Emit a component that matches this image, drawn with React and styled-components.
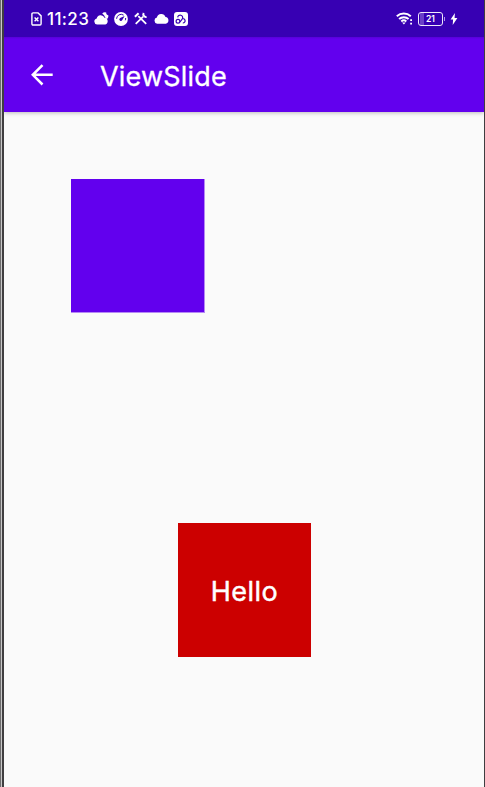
import React from "react";
import styled, { createGlobalStyle } from "styled-components";

const GlobalStyle = createGlobalStyle`
  * { box-sizing: border-box; }
  body { margin: 0; background: #fafafa; overflow: hidden; }
`;

const Frame = styled.div`
  display: flex;
  flex-direction: column;
  width: 485px;
  height: 787px;
  border-right: 1px solid #3f3d40;
  padding-left: 4px;
  background: linear-gradient(90deg, #6d6b6d 0 1px, #c8c8c8 1px 2px, #403e40 2px 4px, #fafafa 4px);
  font-family: Inter, Roboto, sans-serif;
  color: #fff;
`;

const StatusBar = styled.header`
  display: flex;
  justify-content: space-between;
  align-items: center;
  height: 37px;
  flex: none;
  padding: 0 26px 0 27px;
  background: #3700b3;
`;

const StatusGroup = styled.div`
  display: flex;
  align-items: center;
  height: 37px;
`;

const Clock = styled.time`
  width: 46px;
  margin-right: 1px;
  padding-top: 2px;
  font-size: 17px;
  font-weight: 500;
  line-height: 35px;
  letter-spacing: ${(p) => p.$tracking};
  white-space: nowrap;
`;

const Glyph = styled.svg`
  display: block;
  flex: none;
  width: ${(p) => p.$w}px;
  height: ${(p) => p.$h}px;
  margin-right: ${(p) => p.$gap || 0}px;
  fill: ${(p) => (p.$line ? "none" : "#fff")};
  stroke: ${(p) => (p.$line ? "#fff" : "none")};
  stroke-width: ${(p) => p.$line || 0};
`;

const Battery = styled.div`
  position: relative;
  display: flex;
  align-items: center;
  justify-content: center;
  width: 25px;
  height: 14px;
  margin-right: 7px;
  border: 1px solid #eee9fa;
  border-radius: 3px;
  background: linear-gradient(90deg, transparent 1px, #6a40c8 1px 5px, transparent 5px);
  font-size: 8.5px;
  font-weight: 600;
  line-height: 12px;

  &::after {
    content: "";
    position: absolute;
    right: -3px;
    top: 4px;
    width: 1px;
    height: 4px;
    background: #af99e0;
  }
`;

const AppBar = styled.nav`
  display: flex;
  align-items: center;
  height: 75px;
  flex: none;
  padding-left: 26px;
  background: linear-gradient(#5800d8 0, #6200ee 2px);
  box-shadow: 0 1px 4px rgba(0, 0, 0, 0.25);
  clip-path: inset(0 0 -8px 0);
`;

const Title = styled.h1`
  margin: 4px 0 0 46px;
  font-size: 27px;
  font-weight: 400;
  line-height: 36px;
  letter-spacing: 0.2px;
  -webkit-text-stroke: 0.3px #fff;
`;

const Canvas = styled.main`
  display: flex;
  flex-direction: column;
  padding: 67px 0 0 67px;
`;

const Block = styled.div`
  display: flex;
  align-items: center;
  justify-content: center;
  width: 133px;
  height: 133px;
  background: ${(p) => p.$color};
`;

const SlideBlock = styled(Block)`
  width: 134px;
  height: 134px;
  border: solid rgba(250, 250, 250, 0.55);
  border-width: 0 1px 1px 0;
`;

const HelloBlock = styled(Block)`
  height: 134px;
  margin: 210px 0 0 107px;
  padding-top: 4px;
  font-size: 27px;
  font-weight: 400;
  line-height: 36px;
  letter-spacing: 0.45px;
  -webkit-text-stroke: 0.45px #fff;
`;

export default function App() {
  return (
    <>
      <GlobalStyle />
      <Frame>
        <StatusBar>
          <StatusGroup>
            <Glyph $w={11} $h={14} $gap={5} $line={1.4} viewBox="0 0 11 14">
              <path d="M2.1.9h5l3 3v7.9q0 1.2-1.2 1.2H2.1Q.9 13 .9 11.8V2.1Q.9.9 2.1.9z" />
              <path d="m3.6 5.4 3.8 3.8m0-3.8L3.6 9.2" />
            </Glyph>
            <Clock $tracking="0.35px">11:23</Clock>
            <Glyph $w={15} $h={13} $gap={5} viewBox="0 0 15 13">
              <path d="M3.2 12.5a3.1 3.1 0 0 1-.5-6.1A4.1 4.1 0 0 1 10.5 5.7a3.5 3.5 0 0 1 .8 6.8z" />
              <path d="M8.2 1.4A4 4 0 0 1 12.3.6q-.6 2.2 2.1 2.8.1 1.7-.9 3.1l-.8.8q-.5-1.1-1.5-1.9-.8-2.5-3-4z" />
            </Glyph>
            <Glyph $w={14} $h={14} $gap={6} viewBox="0 0 14 14">
              <circle cx="7" cy="7" r="6.9" />
              <path d="M2.6 6.8A4.5 4.5 0 0 1 9.6 3.1M11.6 6a4.7 4.7 0 0 1-.3 2.3" fill="none" stroke="#3700b3" strokeWidth="1" />
              <path d="m10.6 4.1-2.3 4a1.6 1.6 0 1 1-2.2-2.2z" fill="#3700b3" />
            </Glyph>
            <Glyph $w={14} $h={13} $gap={6} $line={1.8} viewBox="0 0 14 13">
              <path d="m4.3 4.2 7.9 7.6M1.7 11.8l7.5-7.1" />
              <path d="m.9 4.8 3.7-3.6M9.7 1.1a2.6 2.6 0 0 0 2.9 3.8" strokeWidth="2" />
            </Glyph>
            <Glyph $w={15} $h={11} $gap={5} viewBox="0 0 15 11">
              <path d="M3.2 10.7a3.1 3.1 0 0 1-.3-6.1A4.5 4.5 0 0 1 11.5 4a3.4 3.4 0 0 1 .2 6.7z" />
            </Glyph>
            <Glyph $w={14} $h={14} viewBox="0 0 14 14">
              <rect width="14" height="14" rx="3" />
              <g fill="none" stroke="#3700b3" strokeWidth="1.2">
                <circle cx="4" cy="9.2" r="1.9" />
                <path d="M3.7 5.4a2.5 2.5 0 1 1 4.8 1.2L6 10M7.8 6.9a2.2 2.2 0 1 1 1 4.1" />
              </g>
            </Glyph>
          </StatusGroup>
          <StatusGroup>
            <Glyph $w={17} $h={13} $gap={5} $line={2} viewBox="0 0 17 13">
              <path d="M.8 4.2a10.4 10.4 0 0 1 14 0M3.1 7a7 7 0 0 1 9.5 0M5.3 9.4a3.8 3.8 0 0 1 5 0" />
              <path d="m6.1 10.4 1.8 2.2 1.8-2.2zM14.2 7.2H16V9h-1.8zM14.2 10.8H16v1.8h-1.8z" fill="#fff" stroke="none" />
            </Glyph>
            <Battery>21</Battery>
            <Glyph $w={8} $h={12} viewBox="0 0 8 12">
              <path d="M4.9 0 .6 6.6h2.5l-.4 5.3L7.4 4.9H4.6z" />
            </Glyph>
          </StatusGroup>
        </StatusBar>
        <AppBar>
          <Glyph $w={24} $h={24} $line={2.5} viewBox="0 0 24 24">
            <path d="M22.7 11.8H3M12.5 2.1 2.8 11.8l9.7 9.7" />
          </Glyph>
          <Title>ViewSlide</Title>
        </AppBar>
        <Canvas>
          <SlideBlock $color="#6200ee" />
          <HelloBlock $color="#cc0000">Hello</HelloBlock>
        </Canvas>
      </Frame>
    </>
  );
}
